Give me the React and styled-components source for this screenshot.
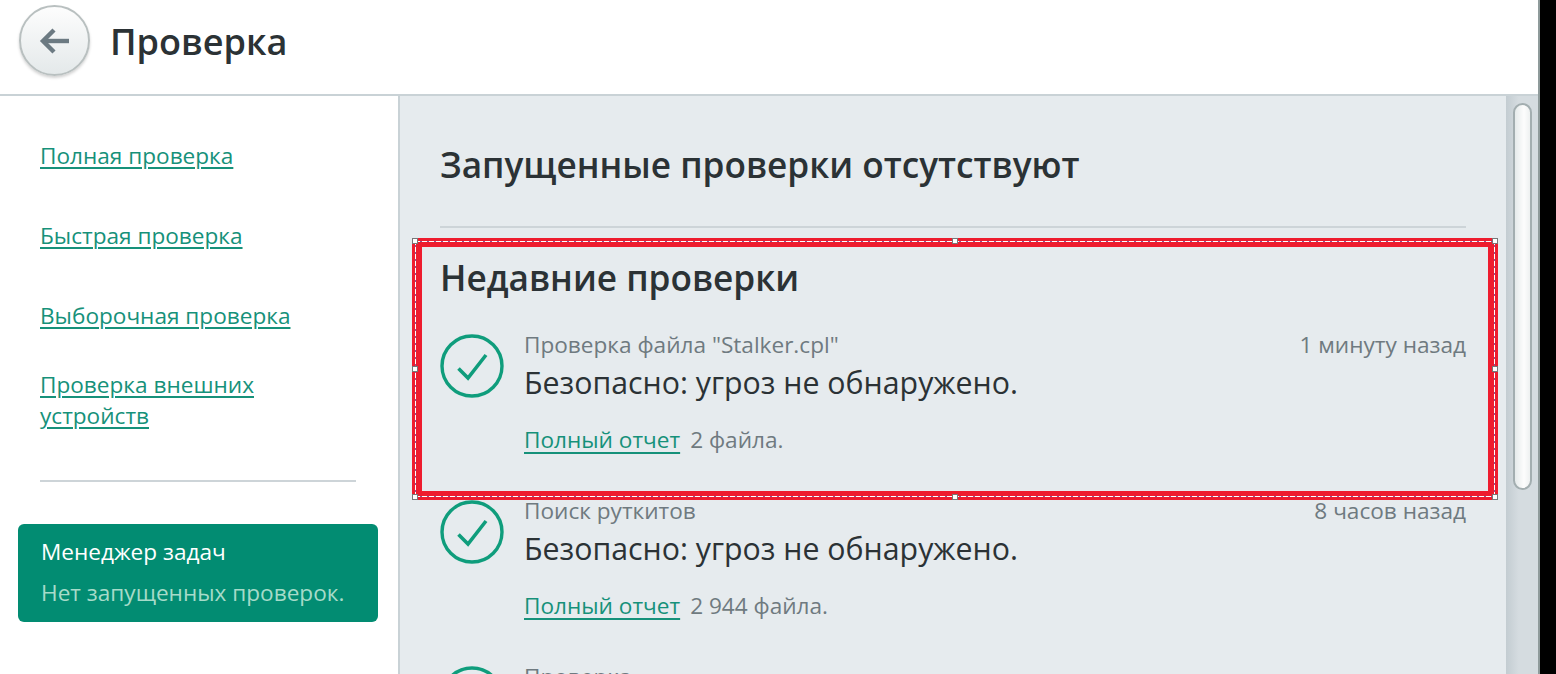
import React from "react";
import styled, { createGlobalStyle } from "styled-components";

const Global = createGlobalStyle`
  html, body { margin: 0; padding: 0; background: #000; overflow: hidden; }
  * { box-sizing: border-box; }
`;
const FONT = `"Open Sans", "Noto Sans", "Liberation Sans", sans-serif`;

const Screen = styled.div`
  width: 1556px; height: 674px; display: flex; background: #000; overflow: hidden;
  font-family: ${FONT};
`;
const Win = styled.div`
  width: 1540px; height: 674px; display: flex; flex-direction: column;
  background: #fff; border-right: 2px solid #8f9b9b; position: relative;
`;
const Header = styled.header`
  height: 96px; flex: none; display: flex; align-items: center; gap: 20px;
  padding: 0 0 13px 19px; border-bottom: 2px solid #c9d2d6;
`;
const BackButton = styled.button`
  width: 71px; height: 71px; border-radius: 50%; padding: 0; display: flex;
  align-items: center; justify-content: center;
  border: 2px solid #b9c0c0; background: linear-gradient(#fdfdfd, #e4e9ea);
  box-shadow: 0 2px 3px rgba(0,0,0,.18);
`;
const PageTitle = styled.h1`
  margin: 0; font-size: 36.1px; font-weight: 600; color: #2b3235;
`;
const Body = styled.div`flex: 1; display: flex; min-height: 0;`;
const Side = styled.aside`
  width: 400px; flex: none; border-right: 2px solid #c9d2d6;
  padding: 44px 20px 0 18px; display: flex; flex-direction: column;
`;
const SideLink = styled.a`
  display: block; width: 270px; margin-left: 22px; color: #16917a; font-size: 22.6px; line-height: 31px;
  text-decoration: underline; text-underline-offset: 3px; text-decoration-thickness: 2px;
  margin-bottom: ${p => p.$gap}px;
`;
const SideRule = styled.hr`
  margin: 49px 22px 42px 22px; border: 0; height: 2px; background: #cdd4d8;
`;
const Task = styled.div`
  height: 98px; width: 360px; background: #028c72; border-radius: 6px;
  padding: 12px 23px; display: flex; flex-direction: column; gap: 10px;
`;
const TaskTitle = styled.div`color: #fff; font-size: 22.6px; line-height: 31px;`;
const TaskText = styled.div`color: #a6dbc9; font-size: 22.6px; line-height: 31px; white-space: nowrap;`;
const Main = styled.main`
  flex: 1; background: #e6ebee; padding: 44px 40px 0; overflow: hidden; min-width: 0;
`;
const H2 = styled.h2`
  margin: 0; font-size: 35.2px; line-height: 48px; font-weight: 600; color: #2b3235;
`;
const MainRule = styled.hr`
  margin: 38px 0 25px; border: 0; height: 2px; background: #cdd4d8;
`;
const Results = styled.div`display: flex; flex-direction: column; margin-top: 18px;`;
const Row = styled.div`
  height: 166px; display: flex; gap: 20px; align-items: flex-start;
`;
const IconWrap = styled.div`width: 64px; height: 64px; flex: none; margin-top: 15px;`;
const RowBody = styled.div`flex: 1; min-width: 0; padding-top: 10px;`;
const RowTop = styled.div`
  display: flex; justify-content: space-between; color: #6f7a80; font-size: 22.6px; line-height: 31px;
`;
const Status = styled.div`color: #2b3235; font-size: 30.3px; line-height: 40px; margin-top: 3px;`;
const RowFoot = styled.div`
  display: flex; gap: 10px; margin-top: 21px; font-size: 22.6px; line-height: 31px; color: #6f7a80;
`;
const Report = styled.a`
  color: #16917a; text-decoration: underline; text-underline-offset: 4px; text-decoration-thickness: 2px;
`;
const Track = styled.div`
  width: 32px; flex: none; background: linear-gradient(90deg, #c3ccd1, #d5dce0 40%, #d5dce0);
  padding: 7px 6px 0 7px;
`;
const Thumb = styled.div`
  height: 387px; width: 19px; border-radius: 10px; border: 2px solid #a3aeb0;
  background: linear-gradient(90deg, #e6ebeb, #fdfdfd 60%, #eef1f1);
`;
const DASH_H = "repeating-linear-gradient(90deg, #fff 0 5px, #8a5a96 5px 7px)";
const DASH_V = "repeating-linear-gradient(0deg, #fff 0 5px, #8a5a96 5px 7px)";
const Mark = styled.div`
  position: absolute; left: 412px; top: 238px; width: 1086px; height: 262px;
  border: 9px solid #ee1c2e; border-left-width: 10px; border-right-width: 10px; pointer-events: none;
  &::after {
    content: ""; position: absolute; inset: -6px -7px;
    background:
      ${DASH_H} top / 100% 1px no-repeat,
      ${DASH_H} bottom / 100% 1px no-repeat,
      ${DASH_V} left / 1px 100% no-repeat,
      ${DASH_V} right / 1px 100% no-repeat;
  }
`;
const Handle = styled.span`
  position: absolute; width: 6px; height: 6px; background: #fff; border: 1px solid #777;
  z-index: 1; transform: translate(-50%, -50%);
  left: ${p => p.$x}%; top: ${p => p.$y}%;
`;
const HandleLayer = styled.div`position: absolute; inset: -6px -7px;`;

const Check = () => (
  <svg width="64" height="64" viewBox="0 0 64 64" fill="none" stroke="#0f9d7c">
    <circle cx="32" cy="32" r="30" strokeWidth="3.4" />
    <path d="M18.5 34.5 L28 44 L46 21" strokeWidth="3.6" />
  </svg>
);

const rows = [
  { label: "Проверка файла \"Stalker.cpl\"", time: "1 минуту назад", count: "2 файла." },
  { label: "Поиск руткитов", time: "8 часов назад", count: "2 944 файла." },
  { label: "Проверка" },
];
const handles = [[0,0],[50,0],[100,0],[0,50],[100,50],[0,100],[50,100],[100,100]];

export default function App() {
  return (
    <Screen>
      <Global />
      <Win>
        <Header>
          <BackButton aria-label="Назад">
            <svg width="32" height="28" viewBox="0 0 32 28" fill="none" stroke="#6c7a82" strokeWidth="4.4">
              <path d="M30 14 H4" />
              <path d="M15 3 L4 14 L15 25" />
            </svg>
          </BackButton>
          <PageTitle>Проверка</PageTitle>
        </Header>
        <Body>
          <Side>
            <SideLink $gap={49}>Полная проверка</SideLink>
            <SideLink $gap={49}>Быстрая проверка</SideLink>
            <SideLink $gap={38}>Выборочная проверка</SideLink>
            <SideLink $gap={0}>Проверка внешних устройств</SideLink>
            <SideRule />
            <Task>
              <TaskTitle>Менеджер задач</TaskTitle>
              <TaskText>Нет запущенных проверок.</TaskText>
            </Task>
          </Side>
          <Main>
            <H2>Запущенные проверки отсутствуют</H2>
            <MainRule />
            <H2>Недавние проверки</H2>
            <Results>
              {rows.map(({ label, time, count }) => (
                <Row key={label}>
                  <IconWrap><Check /></IconWrap>
                  <RowBody>
                    <RowTop><span>{label}</span><span>{time}</span></RowTop>
                    {count && <Status>Безопасно: угроз не обнаружено.</Status>}
                    {count && <RowFoot><Report>Полный отчет</Report><span>{count}</span></RowFoot>}
                  </RowBody>
                </Row>
              ))}
            </Results>
          </Main>
          <Track><Thumb /></Track>
        </Body>
        <Mark>
          <HandleLayer>
            {handles.map(([x, y]) => <Handle key={`${x}-${y}`} $x={x} $y={y} />)}
          </HandleLayer>
        </Mark>
      </Win>
    </Screen>
  );
}
